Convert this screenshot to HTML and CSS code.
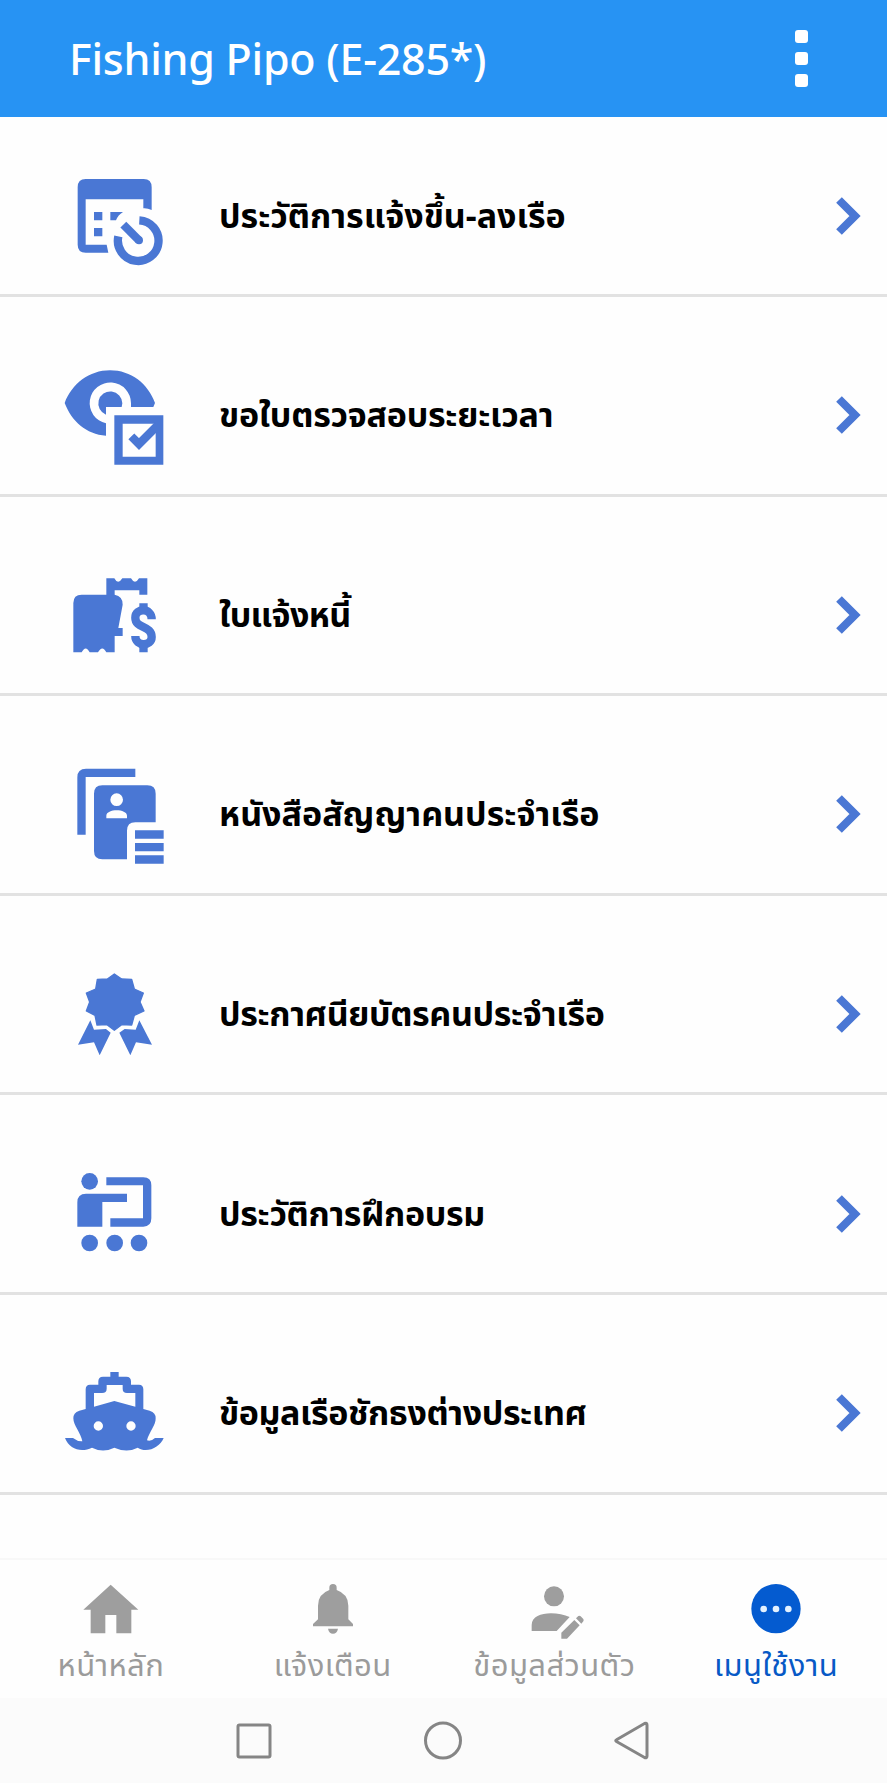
FILE: index.html
```html
<!DOCTYPE html>
<html lang="th">
<head>
	<meta charset="UTF-8">
	<title>Fishing Pipo</title>
	<link rel="stylesheet" href="styles.css">
</head>
<body>
	<div class="app">
		<div class="header">
			<h1>Fishing Pipo (E-285*)</h1>
			<a href="javascript:;" class="more"><span></span><span></span><span></span></a>
		</div>
		<ul class="menu">
			<li>
				<svg class="icon" viewBox="0 -30 420 390">
					<path d="M107 57H281Q305 57 305 82V150Q292 144 280 145V118H107V254H170L175 278H107Q83 278 83 254V82Q83 57 107 57Z"/>
					<path d="M132 156h25v25h-25zM132 204h25v25h-25zM181 156H219Q204 165 198 181H181Z"/>
					<path class="line" d="M268 181A61 61 0 1 1 205 229" stroke-width="25"/>
					<path class="line" d="M220 194L267 241" stroke-width="25"/>
					<circle cx="267" cy="241" r="12"/>
				</svg>
				<span class="txt t1">ประวัติการแจ้งขึ้น-ลงเรือ</span>
				<svg class="arrow" viewBox="0 0 26 40"><path d="M4 4L20 20L4 36"/></svg>
			</li>
			<li>
				<svg class="icon" viewBox="0 -18 420 390">
					<path d="M44 144C66 86 118 46 180 46C243 46 294 86 315 144L310 156H243V145A62 62 0 1 0 168 205V242C109 238 65 199 44 144Z"/>
					<path d="M168 181V156H215L217 145A36 36 0 1 0 168 179Z"/>
					<path fill-rule="evenodd" d="M193 181H340V329H193ZM218 206V305H317V206Z"/>
					<path class="line" d="M244 244L267 267L324 210" stroke-width="25"/>
				</svg>
				<span class="txt t2">ขอใบตรวจสอบระยะเวลา</span>
				<svg class="arrow" viewBox="0 0 26 40"><path d="M4 4L20 20L4 36"/></svg>
			</li>
			<li>
				<svg class="icon" viewBox="0 -19 420 390">
					<path d="M95 118H169V69H193Q204 90 217 69H243Q255 90 267 69H292V118H268V105H194V118Q219 123 218 148L205 218H218V242H194V291H169Q157 268 144 291H119Q107 268 95 291H70V143Q70 118 95 118Z"/>
					<path class="line" d="M305 192C305 156 256 157 256 187C256 221 305 209 305 245C305 274 256 274 256 242" stroke-width="25"/>
					<path d="M268 144h25v26h-25zM268 265h25v26h-25z"/>
				</svg>
				<span class="txt t3">ใบแจ้งหนี้</span>
				<svg class="arrow" viewBox="0 0 26 40"><path d="M4 4L20 20L4 36"/></svg>
			</li>
			<li>
				<svg class="icon" viewBox="0 -5 420 390">
					<path d="M108 57H256V82H107V255H82V83Q82 57 108 57Z"/>
					<path fill-rule="evenodd" d="M157 107H292Q317 107 317 132V218H256Q231 218 231 243V329H157Q132 329 132 304V132Q132 107 157 107ZM200 131A19 19 0 1 0 200 169A19 19 0 1 0 200 131ZM169 206H231V198C231 176 169 176 169 198Z"/>
					<path d="M255 242h86v25h-86zM255 280h86v25h-86zM255 317h86v25h-86z"/>
				</svg>
				<span class="txt t4">หนังสือสัญญาคนประจำเรือ</span>
				<svg class="arrow" viewBox="0 0 26 40"><path d="M4 4L20 20L4 36"/></svg>
			</li>
			<li>
				<svg class="icon" viewBox="0 -7 420 390">
					<path class="round" d="M193 71L215 86L245 87L253 116L280 128L270 155L282 182L253 195L245 224L215 223L193 240L171 223L141 224L135 195L109 182L119 155L109 128L137 116L142 87L172 86Z"/>
					<path d="M121 210L132 238L168 236L182 247L149 315L132 276L84 283Z"/>
					<path d="M268 210L257 238L224 236L208 247L241 315L258 276L306 283Z"/>
				</svg>
				<span class="txt t5">ประกาศนียบัตรคนประจำเรือ</span>
				<svg class="arrow" viewBox="0 0 26 40"><path d="M4 4L20 20L4 36"/></svg>
			</li>
			<li>
				<svg class="icon" viewBox="0 -7 420 390">
					<circle cx="119" cy="93" r="25"/>
					<path d="M108 130H231V155H157V229H82V156Q82 130 108 130Z"/>
					<path d="M169 81H280Q304 81 304 105V204Q304 229 280 229H181V204H279V105H169Z"/>
					<circle cx="119" cy="278" r="25"/><circle cx="194" cy="278" r="25"/><circle cx="267" cy="278" r="25"/>
				</svg>
				<span class="txt t6">ประวัติการฝึกอบรม</span>
				<svg class="arrow" viewBox="0 0 26 40"><path d="M4 4L20 20L4 36"/></svg>
			</li>
			<li>
				<svg class="icon" viewBox="0 -9 420 390">
					<path fill-rule="evenodd" d="M181 66H206V80H229Q243 80 243 94V104H267Q280 104 280 118V177L299 182Q318 188 317 205C318 225 297 247 291 271Q303 275 315 264H341C330 291 291 312 263 293Q231 310 193 293Q159 310 126 293C95 308 58 299 45 264H69Q83 275 97 274C93 249 70 226 70 205Q69 189 88 182L107 177V118Q107 104 120 104H145V94Q145 80 159 80H181ZM170 105V116Q170 129 156 129H132V170L193 153L256 170V129H231Q218 129 218 116V105ZM145 214A14 14 0 1 0 145 242A14 14 0 1 0 145 214ZM243 214A14 14 0 1 0 243 242A14 14 0 1 0 243 214Z"/>
				</svg>
				<span class="txt t7">ข้อมูลเรือชักธงต่างประเทศ</span>
				<svg class="arrow" viewBox="0 0 26 40"><path d="M4 4L20 20L4 36"/></svg>
			</li>
		</ul>
		<div class="tabs">
			<a href="javascript:;">
				<svg viewBox="213 300 240 180"><path d="M332 314L415 389H394V460H349V405H316V460H272V389H250Z"/></svg>
				<span>หน้าหลัก</span>
			</a>
			<a href="javascript:;">
				<svg viewBox="878 300 240 180"><path d="M987 330V323A11 11 0 0 1 1009 323V330Q1044 342 1044 377V418L1058 432V439H938V432L953 418V377Q953 342 987 330ZM983 446H1013Q1010 461 998 461Q986 461 983 446Z"/></svg>
				<span>แจ้งเตือน</span>
			</a>
			<a href="javascript:;">
				<svg viewBox="232 300 240 180"><circle cx="352" cy="349" r="30"/><path d="M285 453V435C286 393 360 394 399 411L360 453ZM374 476V458L413 420L429 436L391 476ZM418 415L425 408Q429 406 432 409L440 417Q442 421 440 424L434 431Z"/></svg>
				<span>ข้อมูลส่วนตัว</span>
			</a>
			<a href="javascript:;" class="on">
				<svg viewBox="897 300 240 180"><circle cx="1017" cy="386" r="74"/><g fill="#e4f2ff"><circle cx="980" cy="387" r="10"/><circle cx="1017" cy="387" r="10"/><circle cx="1054" cy="387" r="10"/></g></svg>
				<span>เมนูใช้งาน</span>
			</a>
		</div>
		<div class="sysbar">
			<svg viewBox="0 0 40 40"><rect x="4" y="4" width="32" height="32" rx="1.500"/></svg>
			<svg viewBox="0 0 40 40"><circle cx="20" cy="19.500" r="17.500"/></svg>
			<svg viewBox="0 0 40 40"><path d="M4.500 18.700L32.500 2.500Q35 1.500 35 4V35Q35 37.500 32.500 36.500L4.500 20.500Q3 19.500 4.500 18.700Z"/></svg>
		</div>
	</div>
</body>
</html>
```
FILE: styles.css
```css
*{
	margin: 0;
	padding: 0;
	box-sizing: border-box;
}
body{
	background: #fefefe;
	font-family: "Noto Sans", "Noto Sans Thai", sans-serif;
}
a{
	text-decoration: none;
}
.app{
	display: flex;
	flex-direction: column;
	width: 887px;
	height: 1783px;
	overflow: hidden;
}
.header{
	flex: none;
	display: flex;
	justify-content: space-between;
	height: 117px;
	padding: 0 79px 0 69px;
	background: #2793f3;
}
.header h1{
	line-height: 118px;
	font-size: 43px;
	font-weight: 500;
	letter-spacing: -0.25px;
	color: #fff;
	white-space: nowrap;
}
.header .more{
	display: flex;
	flex-direction: column;
	gap: 9px;
	padding-top: 30px;
}
.header .more span{
	width: 13px;
	height: 13px;
	border-radius: 3px;
	background: #fff;
}
.menu{
	flex: none;
	height: 1441px;
	overflow: hidden;
	list-style: none;
}
.menu li{
	display: flex;
	align-items: center;
	height: 199.6px;
	padding: 38px 26px 0 50px;
	border-bottom: 3px solid #e2e2e2;
}
.menu li:first-child{
	height: 180px;
	padding-top: 19px;
}
.icon{
	flex: none;
	width: 140px;
	height: 130px;
	fill: #4a77d4;
}
.icon .line{
	fill: none;
	stroke: #4a77d4;
}
.icon .round{
	stroke: #4a77d4;
	stroke-width: 4;
	stroke-linejoin: round;
}
.txt{
	flex: 1;
	padding-left: 29px;
	font-size: 34px;
	font-weight: 700;
	line-height: 60px;
	color: #000;
	white-space: nowrap;
}
.t2{
	letter-spacing: -0.24px;
}
.t3{
	letter-spacing: -0.6px;
}
.t5{
	letter-spacing: -0.36px;
}
.t6{
	letter-spacing: -0.32px;
}
.t7{
	letter-spacing: -0.4px;
}
.arrow{
	flex: none;
	width: 26px;
	height: 40px;
	margin-top: 2px;
	fill: none;
	stroke: #4a77d4;
	stroke-width: 8;
}
.tabs{
	flex: none;
	display: flex;
	height: 140px;
	padding-top: 20px;
	border-top: 2px solid #f8f8f8;
}
.tabs a{
	flex: 1;
	display: flex;
	flex-direction: column;
	align-items: center;
	color: #9b9b9b;
}
.tabs svg{
	width: 80px;
	height: 60px;
	fill: #9e9e9e;
}
.tabs span{
	font-size: 31px;
	line-height: 48px;
	letter-spacing: 0.4px;
	white-space: nowrap;
}
.tabs .on{
	color: #0759c6;
}
.tabs .on svg{
	fill: #045bd0;
}
.sysbar{
	flex: 1;
	display: flex;
	justify-content: center;
	align-items: center;
	gap: 149px;
	padding-right: 2px;
	background: #fbfbfb;
}
.sysbar svg{
	width: 40px;
	height: 40px;
	fill: none;
	stroke: #858585;
	stroke-width: 3;
}
```
